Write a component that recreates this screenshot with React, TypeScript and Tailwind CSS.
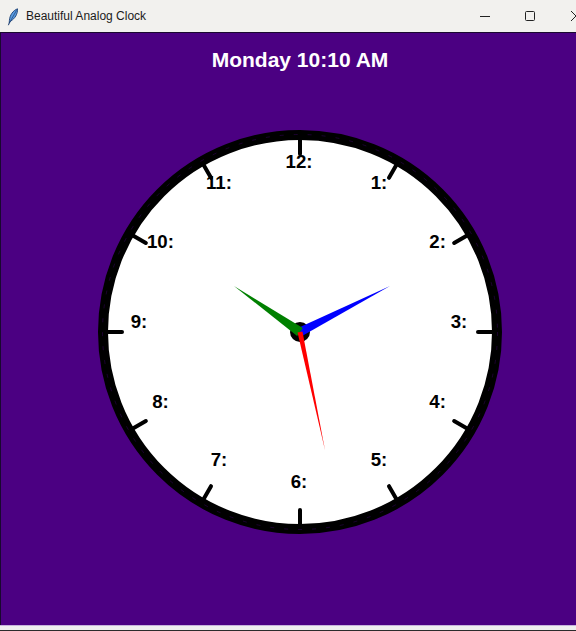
const CX = 210
const CY = 210

function handPoints(tipX: number, tipY: number, hw: number) {
  const dx = tipX - CX
  const dy = tipY - CY
  const len = Math.hypot(dx, dy)
  const px = (-dy / len) * hw
  const py = (dx / len) * hw
  return `${CX + px},${CY + py} ${tipX},${tipY} ${CX - px},${CY - py}`
}

function Feather() {
  return (
    <svg width="12" height="18" viewBox="0 0 12 18" className="block">
      <path d="M10.5 0.8 C6 2.5 2.8 7 2.4 12.5 L2.2 15.2 L3.6 13.2 C8 10.5 10.8 6 10.5 0.8 Z" fill="#5a9be0" stroke="#1d3f73" strokeWidth="0.9" />
      <path d="M9.6 2.2 L2.6 14.6" stroke="#1d3f73" strokeWidth="0.7" />
      <path d="M2.6 14.2 L1.4 17.2" stroke="#1d3f73" strokeWidth="1" />
    </svg>
  )
}

function TitleBar() {
  return (
    <div className="h-8 flex items-center bg-[#f2f1ee] relative">
      <div className="ml-[7px] mt-[1px]">
        <Feather />
      </div>
      <span className="ml-[7px] text-[12px] text-[#1b1b1b] font-['Liberation_Sans',Arial,sans-serif]">
        Beautiful Analog Clock
      </span>
      <div className="ml-auto flex items-center h-full">
        <svg width="12" height="12" viewBox="0 0 12 12" className="mr-[33px]">
          <line x1="1" y1="6.5" x2="11" y2="6.5" stroke="#222" strokeWidth="1" />
        </svg>
        <svg width="12" height="12" viewBox="0 0 12 12" className="mr-[34px]">
          <rect x="1.5" y="1.5" width="9" height="9" rx="1" fill="none" stroke="#222" strokeWidth="1" />
        </svg>
        <svg width="12" height="12" viewBox="0 0 12 12" className="-mr-[6px]">
          <line x1="1" y1="1" x2="11" y2="11" stroke="#222" strokeWidth="1" />
          <line x1="11" y1="1" x2="1" y2="11" stroke="#222" strokeWidth="1" />
        </svg>
      </div>
    </div>
  )
}

function Clock() {
  const hours = Array.from({ length: 12 }, (_, i) => i + 1)
  return (
    <svg width="420" height="420" viewBox="0 0 420 420" className="block mt-[50px]">
      <circle cx={CX} cy={CY} r="197" fill="#ffffff" stroke="#000000" strokeWidth="10" />
      <circle cx={CX} cy={CY} r="197.5" fill="none" stroke="#4b0082" strokeWidth="0.6" strokeDasharray="4 10" opacity="0.6" />
      {hours.map((h) => {
        const a = (h * 30 * Math.PI) / 180
        const s = Math.sin(a)
        const c = Math.cos(a)
        return (
          <line
            key={`t${h}`}
            x1={CX + 178 * s}
            y1={CY - 178 * c}
            x2={CX + 193 * s}
            y2={CY - 193 * c}
            stroke="#000"
            strokeWidth="4"
            strokeLinecap="round"
          />
        )
      })}
      {hours.map((h) => {
        const a = (h * 30 * Math.PI) / 180
        return (
          <text
            key={`n${h}`}
            x={209 + 160 * Math.sin(a)}
            y={199 - 160 * Math.cos(a) + 6.7}
            textAnchor="middle"
            fill="#000"
            className="font-['Liberation_Sans',Arial,sans-serif] font-bold text-[18.67px]"
          >
            {h}:
          </text>
        )
      })}
      <circle cx={CX} cy={CY} r="10" fill="#000" />
      <polygon points={handPoints(300, 164, 4.5)} fill="#0000ff" />
      <polygon points={handPoints(144, 164, 5)} fill="#008000" />
      <polygon points={handPoints(235, 328, 2.5)} fill="#ff0000" />
    </svg>
  )
}

export default function App() {
  return (
    <div className="w-[576px] h-[631px] overflow-hidden bg-[#2b2b2b]">
      <TitleBar />
      <div className="h-[593px] bg-[#4b0082] border-t border-l border-[#1a0830] overflow-hidden">
        <div className="w-[598px] flex flex-col items-center">
          <h1 className="pt-[15px] leading-[24px] text-[21px] font-bold text-white font-['Liberation_Sans',Arial,sans-serif]">
            Monday 10:10 AM
          </h1>
          <Clock />
        </div>
      </div>
      <div className="h-px bg-[#c7b3dc]" />
      <div className="h-[4px] bg-[#efefef]" />
    </div>
  )
}
